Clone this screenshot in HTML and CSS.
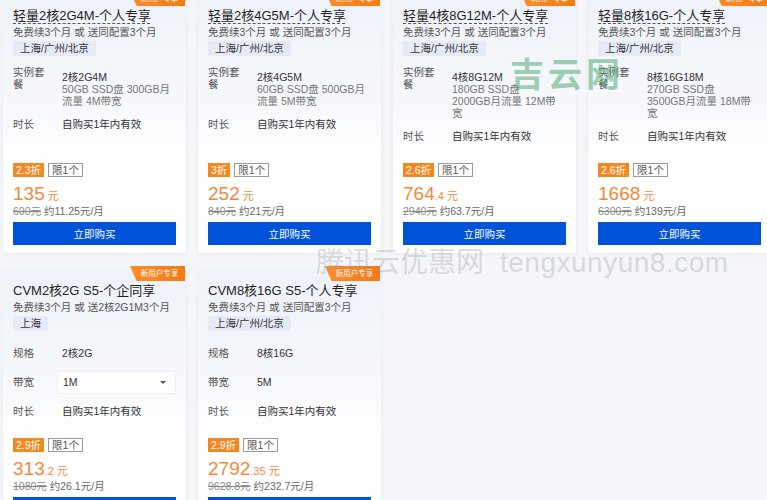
FILE: index.html
```html
<!DOCTYPE html>
<html lang="zh-CN">
<head>
<meta charset="utf-8">
<title>腾讯云优惠</title>
<link rel="stylesheet" href="styles.css">
</head>
<body>
<div class="grid">
  <div class="card">
    <span class="badge">新用户专享</span>
    <div class="title"><span class="dashed">轻量2核2G4M-个人专享</span></div>
    <div class="sub">免费续3个月 或 送同配置3个月</div>
    <div><span class="region">上海/广州/北京</span></div>
    <div class="specs">
      <div class="row top"><div class="label">实例套餐</div><div class="value"><div class="main">2核2G4M</div><div class="detail">50GB SSD盘 300GB月流量 4M带宽</div></div></div>
      <div class="row"><div class="label">时长</div><div class="value">自购买1年内有效</div></div>
    </div>
    <div class="bottom">
      <div class="tags"><span class="disc">2.3折</span><span class="limit">限1个</span></div>
      <div class="price"><span class="big">135</span> <span class="unit">元</span></div>
      <div class="orig"><s>600元</s> 约11.25元/月</div>
      <button class="buy">立即购买</button>
    </div>
  </div>

  <div class="card">
    <span class="badge">新用户专享</span>
    <div class="title"><span class="dashed">轻量2核4G5M-个人专享</span></div>
    <div class="sub">免费续3个月 或 送同配置3个月</div>
    <div><span class="region">上海/广州/北京</span></div>
    <div class="specs">
      <div class="row top"><div class="label">实例套餐</div><div class="value"><div class="main">2核4G5M</div><div class="detail">60GB SSD盘 500GB月流量 5M带宽</div></div></div>
      <div class="row"><div class="label">时长</div><div class="value">自购买1年内有效</div></div>
    </div>
    <div class="bottom">
      <div class="tags"><span class="disc">3折</span><span class="limit">限1个</span></div>
      <div class="price"><span class="big">252</span> <span class="unit">元</span></div>
      <div class="orig"><s>840元</s> 约21元/月</div>
      <button class="buy">立即购买</button>
    </div>
  </div>

  <div class="card">
    <span class="badge">新用户专享</span>
    <div class="title"><span class="dashed">轻量4核8G12M-个人专享</span></div>
    <div class="sub">免费续3个月 或 送同配置3个月</div>
    <div><span class="region">上海/广州/北京</span></div>
    <div class="specs">
      <div class="row top"><div class="label">实例套餐</div><div class="value"><div class="main">4核8G12M</div><div class="detail">180GB SSD盘 2000GB月流量 12M带宽</div></div></div>
      <div class="row"><div class="label">时长</div><div class="value">自购买1年内有效</div></div>
    </div>
    <div class="bottom">
      <div class="tags"><span class="disc">2.6折</span><span class="limit">限1个</span></div>
      <div class="price"><span class="big">764</span><span class="unit">.4 元</span></div>
      <div class="orig"><s>2940元</s> 约63.7元/月</div>
      <button class="buy">立即购买</button>
    </div>
  </div>

  <div class="card">
    <span class="badge">新用户专享</span>
    <div class="title"><span class="dashed">轻量8核16G-个人专享</span></div>
    <div class="sub">免费续3个月 或 送同配置3个月</div>
    <div><span class="region">上海/广州/北京</span></div>
    <div class="specs">
      <div class="row top"><div class="label">实例套餐</div><div class="value"><div class="main">8核16G18M</div><div class="detail">270GB SSD盘 3500GB月流量 18M带宽</div></div></div>
      <div class="row"><div class="label">时长</div><div class="value">自购买1年内有效</div></div>
    </div>
    <div class="bottom">
      <div class="tags"><span class="disc">2.6折</span><span class="limit">限1个</span></div>
      <div class="price"><span class="big">1668</span> <span class="unit">元</span></div>
      <div class="orig"><s>6300元</s> 约139元/月</div>
      <button class="buy">立即购买</button>
    </div>
  </div>

  <div class="card">
    <span class="badge">新用户专享</span>
    <div class="title">CVM2核2G S5-个企同享</div>
    <div class="sub">免费续3个月 或 送2核2G1M3个月</div>
    <div><span class="region">上海</span></div>
    <div class="specs">
      <div class="row"><div class="label">规格</div><div class="value">2核2G</div></div>
      <div class="row"><div class="label">带宽</div><div class="select"><span>1M</span><span class="caret"></span></div></div>
      <div class="row"><div class="label">时长</div><div class="value">自购买1年内有效</div></div>
    </div>
    <div class="bottom">
      <div class="tags"><span class="disc">2.9折</span><span class="limit">限1个</span></div>
      <div class="price"><span class="big">313</span><span class="unit">.2 元</span></div>
      <div class="orig"><s>1080元</s> 约26.1元/月</div>
      <button class="buy">立即购买</button>
    </div>
  </div>

  <div class="card">
    <span class="badge">新用户专享</span>
    <div class="title">CVM8核16G S5-个人专享</div>
    <div class="sub">免费续3个月 或 送同配置3个月</div>
    <div><span class="region">上海/广州/北京</span></div>
    <div class="specs">
      <div class="row"><div class="label">规格</div><div class="value">8核16G</div></div>
      <div class="row"><div class="label">带宽</div><div class="value">5M</div></div>
      <div class="row"><div class="label">时长</div><div class="value">自购买1年内有效</div></div>
    </div>
    <div class="bottom">
      <div class="tags"><span class="disc">2.9折</span><span class="limit">限1个</span></div>
      <div class="price"><span class="big">2792</span><span class="unit">.35 元</span></div>
      <div class="orig"><s>9628.8元</s> 约232.7元/月</div>
      <button class="buy">立即购买</button>
    </div>
  </div>
</div>

<div class="wm-green">吉云网</div>
<div class="wm-gray"><span>腾讯云优惠网</span><span class="wm-latin">tengxunyun8.com</span></div>
</body>
</html>
```

FILE: styles.css
```css
html, body {
  margin: 0;
  padding: 0;
}
body {
  width: 767px;
  height: 500px;
  overflow: hidden;
  position: relative;
  background: #f5f6f9;
  font-family: "Liberation Sans", "Noto Sans CJK SC", sans-serif;
  font-size: 10.5px;
  color: #333;
}
.grid {
  display: grid;
  grid-template-columns: repeat(4, 183px);
  column-gap: 12px;
  row-gap: 17px;
  margin: -5px 0 0 3px;
}
.card {
  position: relative;
  display: flex;
  flex-direction: column;
  padding: 12px 10px 8px;
  background: linear-gradient(180deg, #eef2f9 0%, #f7f9fc 45%, #ffffff 65%);
  box-shadow: 0 1px 4px rgba(40, 60, 100, 0.07);
}
.badge {
  position: absolute;
  top: -4px;
  right: 1px;
  width: 55px;
  height: 15px;
  line-height: 15px;
  padding-left: 4px;
  box-sizing: border-box;
  text-align: center;
  font-size: 7.5px;
  color: #fff;
  background: linear-gradient(90deg, #ff8c2a, #f57a14);
  clip-path: polygon(0 0, 100% 0, 100% 100%, 12% 100%);
}
.title {
  font-size: 13px;
  line-height: 18px;
  color: #1f1f1f;
  white-space: nowrap;
}
.dashed {
  text-decoration: underline dashed #555 1px;
  text-underline-offset: 3px;
}
.sub {
  font-size: 10.5px;
  line-height: 14px;
  color: #555;
  white-space: nowrap;
}
.region {
  display: inline-block;
  margin-top: 2px;
  height: 15px;
  line-height: 15px;
  padding: 0 7px;
  background: #e4ebf7;
  color: #333;
}
.specs {
  margin-top: 10px;
  display: flex;
  flex-direction: column;
  gap: 5px;
}
.row {
  display: flex;
  align-items: center;
  min-height: 24px;
}
.row.top {
  align-items: flex-start;
}
.label {
  width: 38px;
  padding-right: 6px;
  flex: none;
  line-height: 12px;
  color: #555;
}
.value {
  flex: 1;
  padding: 0 6px 0 5px;
  line-height: 12px;
  color: #333;
}
.row.top .value {
  padding-top: 5px;
}
.detail {
  color: #777;
}
.select {
  flex: 1;
  height: 23px;
  box-sizing: border-box;
  display: flex;
  align-items: center;
  justify-content: space-between;
  padding: 0 9px 0 5px;
  background: #fff;
  border: 1px solid #f0f1f4;
}
.caret {
  width: 0;
  height: 0;
  border-left: 3px solid transparent;
  border-right: 3px solid transparent;
  border-top: 3px solid #555;
}
.bottom {
  margin-top: auto;
  padding-top: 15px;
}
.tags {
  display: flex;
  gap: 4px;
  height: 14px;
}
.disc {
  height: 14px;
  line-height: 14px;
  padding: 0 3px;
  background: #f5871f;
  color: #fff;
}
.limit {
  height: 14px;
  line-height: 12px;
  padding: 0 3px;
  box-sizing: border-box;
  border: 1px solid #9a9a9a;
  color: #555;
}
.price {
  margin-top: 6px;
  line-height: 22px;
  height: 22px;
  color: #ef8a3c;
  white-space: nowrap;
}
.big {
  font-size: 19px;
}
.unit {
  font-size: 11px;
}
.orig {
  line-height: 12px;
  color: #666;
  white-space: nowrap;
}
.orig s {
  color: #888;
}
.buy {
  display: block;
  width: 100%;
  height: 23px;
  margin-top: 5px;
  border: 0;
  background: #0052d9;
  color: #fff;
  font-family: inherit;
  font-size: 10.5px;
  cursor: pointer;
}
.wm-green {
  position: absolute;
  left: 510px;
  top: 48px;
  font-size: 34px;
  font-weight: 700;
  letter-spacing: 4px;
  font-family: "Noto Sans CJK SC", sans-serif;
  color: rgba(80, 170, 115, 0.55);
  pointer-events: none;
}
.wm-gray {
  position: absolute;
  left: 316px;
  top: 240px;
  font-size: 28px;
  font-family: "Liberation Sans", "Noto Sans CJK SC", sans-serif;
  color: rgba(150, 150, 155, 0.32);
  white-space: nowrap;
  pointer-events: none;
}
.wm-latin {
  margin-left: 16px;
  letter-spacing: 0.5px;
}
```
